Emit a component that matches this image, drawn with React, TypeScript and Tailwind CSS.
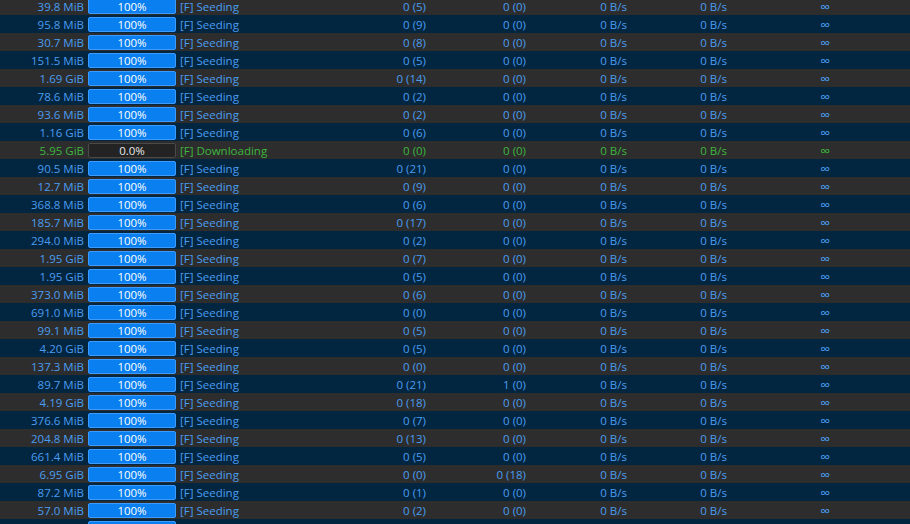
const rows: [string, string, string, boolean?][] = [
  ["39.8 MiB", "0 (5)", "0 (0)"],
  ["95.8 MiB", "0 (9)", "0 (0)"],
  ["30.7 MiB", "0 (8)", "0 (0)"],
  ["151.5 MiB", "0 (5)", "0 (0)"],
  ["1.69 GiB", "0 (14)", "0 (0)"],
  ["78.6 MiB", "0 (2)", "0 (0)"],
  ["93.6 MiB", "0 (2)", "0 (0)"],
  ["1.16 GiB", "0 (6)", "0 (0)"],
  ["5.95 GiB", "0 (0)", "0 (0)", true],
  ["90.5 MiB", "0 (21)", "0 (0)"],
  ["12.7 MiB", "0 (9)", "0 (0)"],
  ["368.8 MiB", "0 (6)", "0 (0)"],
  ["185.7 MiB", "0 (17)", "0 (0)"],
  ["294.0 MiB", "0 (2)", "0 (0)"],
  ["1.95 GiB", "0 (7)", "0 (0)"],
  ["1.95 GiB", "0 (5)", "0 (0)"],
  ["373.0 MiB", "0 (6)", "0 (0)"],
  ["691.0 MiB", "0 (0)", "0 (0)"],
  ["99.1 MiB", "0 (5)", "0 (0)"],
  ["4.20 GiB", "0 (5)", "0 (0)"],
  ["137.3 MiB", "0 (0)", "0 (0)"],
  ["89.7 MiB", "0 (21)", "1 (0)"],
  ["4.19 GiB", "0 (18)", "0 (0)"],
  ["376.6 MiB", "0 (7)", "0 (0)"],
  ["204.8 MiB", "0 (13)", "0 (0)"],
  ["661.4 MiB", "0 (5)", "0 (0)"],
  ["6.95 GiB", "0 (0)", "0 (18)"],
  ["87.2 MiB", "0 (1)", "0 (0)"],
  ["57.0 MiB", "0 (2)", "0 (0)"],
];

function Row({ size, seeds, peers, downloading, odd, blank }: {
  size: string;
  seeds: string;
  peers: string;
  downloading?: boolean;
  odd: boolean;
  blank?: boolean;
}) {
  const text = downloading ? "text-[#3fb63f]" : "text-[#4a9df0]";
  return (
    <div
      className={`flex h-[18px] shrink-0 items-start overflow-hidden whitespace-nowrap ${text} ${
        odd ? "bg-[#022540]" : "bg-[#2d2d2d]"
      }`}
    >
      <div className="w-[84px] pt-[1px] text-right">{blank ? "" : size}</div>
      <div className="ml-[4px] flex h-[18px] w-[88px] flex-col pt-[2px] pb-[1px]">
        {downloading ? (
          <div className="flex flex-1 items-center justify-center rounded-[2px] border border-[#4a4a4a] bg-[#232323] leading-none text-[#e8e8e8]">
            0.0%
          </div>
        ) : (
          <div className="flex flex-1 items-center justify-center rounded-[2px] border border-[#3d9bff] bg-[#0a7fef] leading-none text-white">
            {blank ? "" : "100%"}
          </div>
        )}
      </div>
      {blank ? null : (
        <>
          <div className="w-[160px] pt-[1px] pl-[4px]">
            {downloading ? "[F] Downloading" : "[F] Seeding"}
          </div>
          <div className="w-[90px] pt-[1px] text-right">{seeds}</div>
          <div className="w-[100px] pt-[1px] text-right">{peers}</div>
          <div className="w-[101px] pt-[1px] text-right">0 B/s</div>
          <div className="w-[100px] pt-[1px] text-right">0 B/s</div>
          <div className="w-[103px] pt-[1px] text-right text-[14px] leading-[17px]">∞</div>
        </>
      )}
    </div>
  );
}

export default function App() {
  return (
    <div
      className="flex h-[524px] w-[910px] flex-col overflow-hidden bg-[#2d2d2d] text-[11.5px] leading-[18px]"
      style={{ fontFamily: '"Open Sans", "Noto Sans", sans-serif' }}
    >
      <div className="-mt-[3px] flex flex-col">
        {rows.map(([size, seeds, peers, downloading], i) => (
          <Row
            key={i}
            size={size}
            seeds={seeds}
            peers={peers}
            downloading={downloading}
            odd={i % 2 === 1}
          />
        ))}
        <Row size="" seeds="" peers="" odd blank />
      </div>
    </div>
  );
}
